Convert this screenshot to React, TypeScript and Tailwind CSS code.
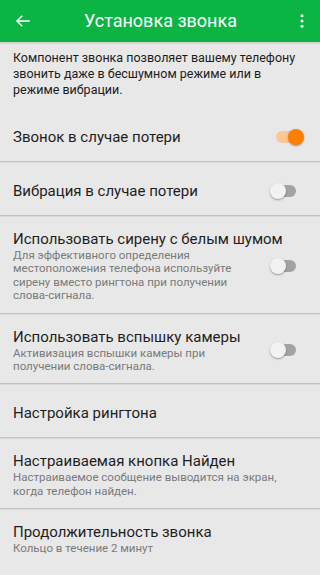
import React from "react";

type Row = {
  title: string;
  sub?: string;
  toggle?: "on" | "off";
};

const rows: Row[] = [
  { title: "Звонок в случае потери", toggle: "on" },
  { title: "Вибрация в случае потери", toggle: "off" },
  {
    title: "Использовать сирену с белым шумом",
    sub: "Для эффективного определения местоположения телефона используйте сирену вместо рингтона при получении слова-сигнала.",
    toggle: "off",
  },
  {
    title: "Использовать вспышку камеры",
    sub: "Активизация вспышки камеры при получении слова-сигнала.",
    toggle: "off",
  },
  { title: "Настройка рингтона" },
  {
    title: "Настраиваемая кнопка Найден",
    sub: "Настраиваемое сообщение выводится на экран, когда телефон найден.",
  },
  {
    title: "Продолжительность звонка",
    sub: "Кольцо в течение 2 минут",
  },
];

function Toggle({ on }: { on: boolean }) {
  return (
    <div className="relative h-[16px] w-[34px] shrink-0">
      <div
        className={
          "absolute left-[6px] top-[2px] h-[12px] w-[20px] rounded-full " +
          (on ? "bg-[#ffc694]" : "bg-[#a3a3a3]")
        }
      />
      <div
        className={
          "absolute top-0 h-[16px] w-[16px] rounded-full shadow-[0_1px_2px_rgba(0,0,0,0.35)] " +
          (on ? "left-[18px] bg-[#ff7f00]" : "left-0 bg-[#f2f2f2]")
        }
      />
    </div>
  );
}

export default function App() {
  return (
    <div
      className="flex h-[575px] w-[320px] flex-col overflow-hidden bg-[#e8e8e8]"
      style={{ fontFamily: "Roboto, 'Noto Sans', sans-serif" }}
    >
      <header className="flex h-[42px] shrink-0 items-center bg-[#0bb443] pl-[14px] pr-[9px] text-white">
        <svg width="18" height="18" viewBox="0 0 24 24" fill="none" stroke="white" strokeWidth="2">
          <path d="M21 12H4" />
          <path d="M11 5l-7 7 7 7" />
        </svg>
        <h1 className="flex-1 pr-[4px] text-center text-[18px] leading-none">Установка звонка</h1>
        <svg width="18" height="18" viewBox="0 0 24 24" fill="white">
          <circle cx="12" cy="5" r="2" />
          <circle cx="12" cy="12" r="2" />
          <circle cx="12" cy="19" r="2" />
        </svg>
      </header>
      <div className="h-[2px] shrink-0 bg-[#d4d4d4]" />

      <p className="whitespace-nowrap px-[13px] pb-[11px] pt-[6px] text-[12.5px] leading-[16px] text-[#1c1c1c]">
        Компонент звонка позволяет вашему телефону
        <br />
        звонить даже в бесшумном режиме или в
        <br />
        режиме вибрации.
      </p>

      {rows.map((r, i) => (
        <div key={i}>
          <div
            className={
              "grid grid-cols-[1fr_auto] items-center px-[13px] " +
              (r.sub ? "pb-[10px] pt-[12px]" : "pb-[14px] pt-[18px]")
            }
          >
            <div className="col-span-2 col-start-1 row-start-1 whitespace-nowrap text-[15px] leading-[20px] text-[#1e1e1e]">
              {r.title}
            </div>
            {r.sub && (
              <div
                className={
                  "col-start-1 row-start-2 text-[11.5px] leading-[13.4px] text-[#7a7a7a] " +
                  (r.toggle ? "pr-[18px]" : "col-span-2")
                }
              >
                {r.sub}
              </div>
            )}
            {r.toggle && (
              <div className="col-start-2 row-span-2 row-start-1 mr-[3px] self-center">
                <Toggle on={r.toggle === "on"} />
              </div>
            )}
          </div>
          {i < rows.length - 1 && (
            <div className="h-[2px] border-t border-[#c2c2c2] bg-[#dadada]" />
          )}
        </div>
      ))}
    </div>
  );
}
